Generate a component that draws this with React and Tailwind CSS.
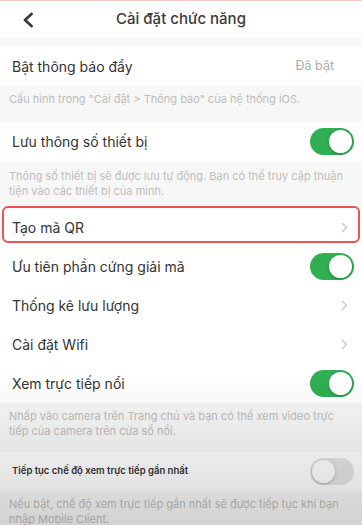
import { useState } from "react";

const font = { fontFamily: "Inter, 'Noto Sans', sans-serif" };

function Toggle({ on, onChange }) {
  return (
    <button
      onClick={() => onChange(!on)}
      className={`relative w-[44px] h-[27px] rounded-full flex-shrink-0 transition-colors ${on ? "bg-[#2fae52]" : "bg-[#e4e4e4]"}`}
    >
      <span
        className={`absolute top-[2px] w-[23px] h-[23px] rounded-full bg-white shadow-[0_1px_3px_rgba(0,0,0,0.25)] ${on ? "left-[19px]" : "left-[2px]"}`}
      />
    </button>
  );
}

function Chevron() {
  return (
    <svg className="w-[7px] h-[11px]" viewBox="0 0 7 11" fill="none" stroke="#c8c8c8" strokeWidth="1.4" strokeLinecap="round" strokeLinejoin="round">
      <path d="M1.5 1.5l4 4-4 4" />
    </svg>
  );
}

function Row({ label, right, small }) {
  return (
    <div className="h-[39px] bg-white flex items-center justify-between pl-[12px] pr-[8px]">
      <span className={small ? "text-[9.5px] font-semibold text-[#333]" : "text-[14px] text-[#333]"}>{label}</span>
      {right}
    </div>
  );
}

function Desc({ children, h }) {
  return (
    <div className={`bg-[#f7f7f7] px-[9px] pt-[6px] text-[11px] leading-[15px] text-[#bdbdbd] ${h}`}>
      {children}
    </div>
  );
}

export default function App() {
  const [t, setT] = useState({ save: true, hw: true, float: true, resume: false });
  const set = (k) => (v) => setT({ ...t, [k]: v });

  return (
    <div className="relative w-[362px] h-[525px] overflow-hidden bg-white" style={font}>
      <div className="h-[1px] bg-[#f5c9bb]" />
      <div className="h-[37px] flex items-center relative">
        <svg className="absolute left-[22px] top-[11px] w-[12px] h-[16px]" viewBox="0 0 12 16" fill="none" stroke="#3a3a3a" strokeWidth="2.8" strokeLinecap="round" strokeLinejoin="round">
          <path d="M9.5 2L3 8l6.5 6" />
        </svg>
        <div className="flex-1 text-center text-[15px] font-medium text-[#3a3a3a]">Cài đặt chức năng</div>
      </div>
      <div className="h-[9px] bg-[#f7f7f7]" />

      <Row label="Bật thông báo đẩy" right={<span className="text-[12.5px] text-[#ababab] mr-[20px]">Đã bật</span>} />
      <Desc h="h-[36px]">Cấu hình trong "Cài đặt &gt; Thông báo" của hệ thống iOS.</Desc>

      <Row label="Lưu thông số thiết bị" right={<Toggle on={t.save} onChange={set("save")} />} />
      <Desc h="h-[47px] pt-[8px]">Thông số thiết bị sẽ được lưu tự động. Bạn có thể truy cập thuận tiện vào các thiết bị của mình.</Desc>

      <div className="relative">
        <Row label="Tạo mã QR" right={<span className="mr-[6px]"><Chevron /></span>} />
        <div className="absolute left-[2px] right-[2px] top-[-2px] bottom-[4px] border-2 border-[#ef5350] rounded-[6px] pointer-events-none" />
      </div>
      <Row label="Ưu tiên phần cứng giải mã" right={<Toggle on={t.hw} onChange={set("hw")} />} />
      <Row label="Thống kê lưu lượng" right={<span className="mr-[6px]"><Chevron /></span>} />
      <Row label="Cài đặt Wifi" right={<span className="mr-[6px]"><Chevron /></span>} />
      <Row label="Xem trực tiếp nổi" right={<Toggle on={t.float} onChange={set("float")} />} />
      <Desc h="h-[49px]">Nhấp vào camera trên Trang chủ và bạn có thể xem video trực tiếp của camera trên cửa sổ nổi.</Desc>

      <Row small label="Tiếp tục chế độ xem trực tiếp gần nhất" right={<Toggle on={t.resume} onChange={set("resume")} />} />
      <Desc h="h-[40px]">Nếu bật, chế độ xem trực tiếp gần nhất sẽ được tiếp tục khi bạn nhập Mobile Client.</Desc>

      <div className="absolute left-0 right-0 bottom-0 h-[150px] bg-gradient-to-b from-transparent to-black/15 pointer-events-none" />
    </div>
  );
}
